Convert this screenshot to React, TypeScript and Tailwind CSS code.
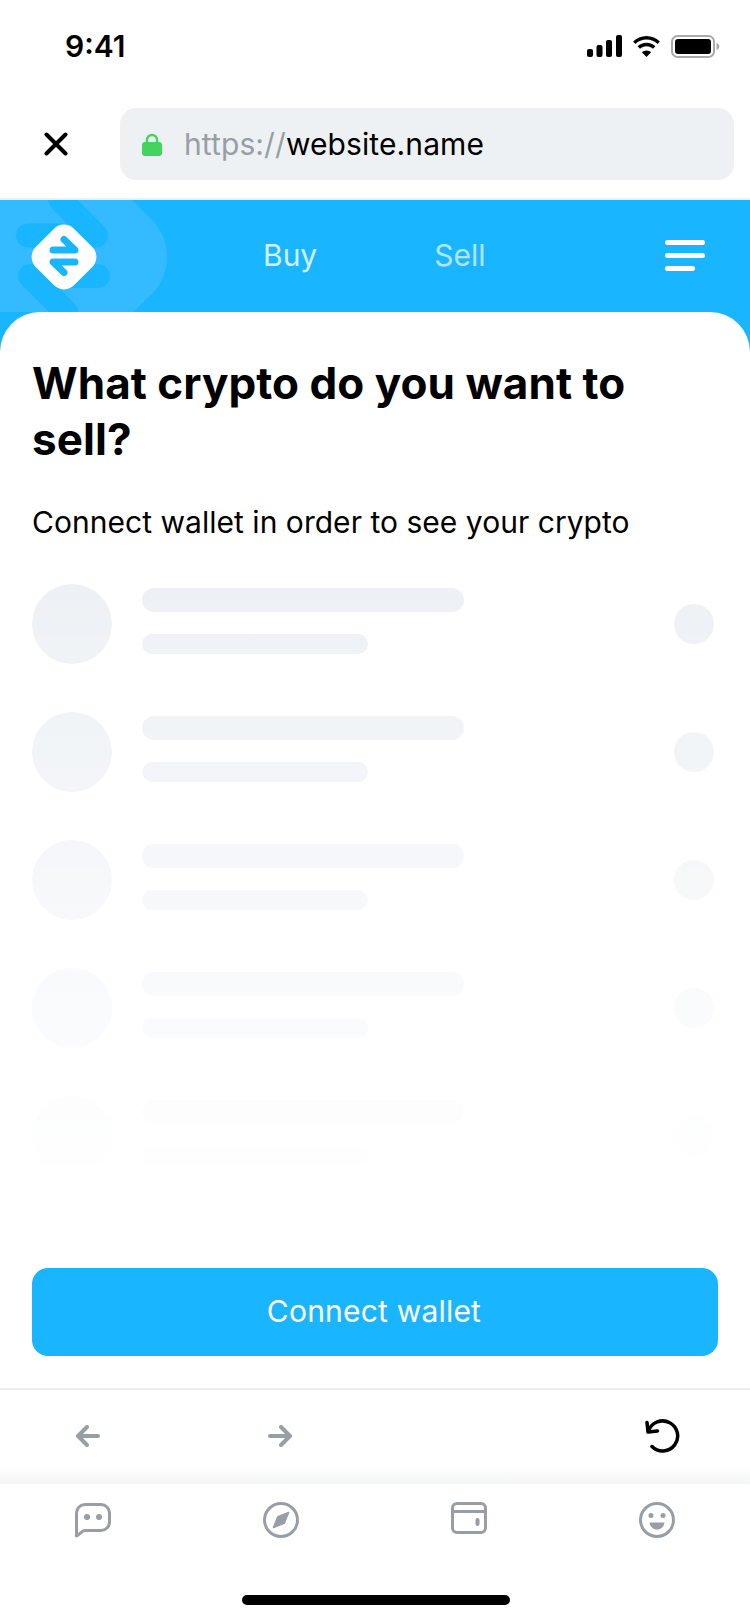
import React from "react";

const ROWS = [0, 1, 2, 3, 4];

function StatusIcons() {
  return (
    <div className="flex items-center gap-[9px]">
      <svg width="35" height="22" viewBox="0 0 35 22" fill="#000">
        <rect x="0" y="14" width="6" height="8" rx="2" />
        <rect x="9.5" y="10" width="6" height="12" rx="2" />
        <rect x="19" y="5" width="6" height="17" rx="2" />
        <rect x="29" y="0" width="6" height="22" rx="2" />
      </svg>
      <svg width="31" height="23" viewBox="0 0 31 23" fill="#000">
        <path d="M15.5 4.6c4.3 0 8.200 1.700 11.100 4.400l2.300-2.400C25.400 3.200 20.700 1 15.500 1S5.600 3.200 2.100 6.600l2.300 2.400c2.900-2.700 6.800-4.400 11.100-4.400z" />
        <path d="M15.500 11.200c2.500 0 4.800 1 6.500 2.500l2.400-2.400c-2.400-2.200-5.500-3.500-8.900-3.500s-6.500 1.300-8.900 3.500l2.400 2.400c1.700-1.500 4-2.500 6.500-2.500z" />
        <path d="M15.500 22l4.600-4.800c-1.200-1.100-2.800-1.800-4.600-1.800s-3.400.7-4.600 1.800z" />
      </svg>
      <svg width="49" height="23" viewBox="0 0 49 23">
        <rect x="1" y="1" width="42" height="21" rx="5.500" fill="none" stroke="#a9a9a9" strokeWidth="2" />
        <rect x="4" y="4" width="36" height="15" rx="3" fill="#000" />
        <path d="M45.500 8v7c1.700-.6 2.800-1.900 2.800-3.500S47.200 8.600 45.500 8z" fill="#a9a9a9" />
      </svg>
    </div>
  );
}

function BrandMark() {
  return (
    <svg className="absolute left-0 top-0" width="170" height="112" viewBox="0 0 170 112" fill="none">
      <path d="M-30 -30H102L152 20C172 40 172 74 152 94L133 112H-30Z" fill="#33baff" />
      <path d="M28 35.500H96L60 -1" stroke="#1ab5ff" strokeWidth="24" strokeLinecap="round" strokeLinejoin="round" />
      <path d="M98 76H30L66 112" stroke="#1ab5ff" strokeWidth="24" strokeLinecap="round" strokeLinejoin="round" />
      <rect x="37" y="30" width="54" height="54" rx="14" transform="rotate(45 64 57)" fill="#fff" />
      <path d="M53 50H75L64 39.500" stroke="#1ab5ff" strokeWidth="7" strokeLinecap="round" strokeLinejoin="round" />
      <path d="M75 62H53L64 72.500" stroke="#1ab5ff" strokeWidth="7" strokeLinecap="round" strokeLinejoin="round" />
    </svg>
  );
}

function SkeletonRow() {
  return (
    <div className="flex items-center">
      <div className="h-20 w-20 rounded-full bg-[#edf1f5]" />
      <div className="mb-[6px] ml-[30px] flex flex-1 flex-col gap-[22px]">
        <div className="h-6 w-[322px] rounded-xl bg-[#edf1f5]" />
        <div className="h-5 w-[226px] rounded-[10px] bg-[#edf1f5]" />
      </div>
      <div className="mr-1 h-10 w-10 rounded-full bg-[#edf1f5]" />
    </div>
  );
}

export default function App() {
  return (
    <div className="flex h-[1624px] w-[750px] flex-col overflow-hidden bg-white font-['Inter',sans-serif] text-black">
      {/* Status bar */}
      <div className="flex h-[90px] shrink-0 items-center justify-between pl-[65px] pr-[30px] pt-[2px]">
        <span className="text-[30px] font-semibold leading-none">9:41</span>
        <StatusIcons />
      </div>

      {/* Address bar */}
      <div className="flex h-[110px] shrink-0 items-start border-b-2 border-[#eef1f4] pl-[44px] pr-4 pt-[18px]">
        <div className="flex h-[72px] items-center">
          <svg width="24" height="24" viewBox="0 0 24 24" fill="none" stroke="#000" strokeWidth="4" strokeLinecap="round">
            <path d="M2.500 2.500L21.500 21.500M21.500 2.500L2.500 21.500" />
          </svg>
        </div>
        <div className="ml-[52px] flex h-[72px] flex-1 items-center rounded-2xl bg-[#eef1f4] pl-[22px]">
          <svg width="20" height="23" viewBox="0 0 20 23" fill="none">
            <path d="M5 11V7a5 5 0 0 1 10 0v4" stroke="#44d35c" strokeWidth="2.500" />
            <rect x="0" y="9" width="20" height="14" rx="3" fill="#44d35c" />
          </svg>
          <span className="ml-[22px] pb-[1px] text-[30px] leading-none tracking-[0.1px]">
            <span className="text-[#979ea5]">https://</span>website.name
          </span>
        </div>
      </div>

      {/* Site */}
      <div className="flex flex-1 flex-col bg-[#1ab5ff]">
        <div className="relative flex h-[112px] shrink-0 items-center overflow-hidden pb-[2px]">
          <BrandMark />
          <span className="relative ml-[263px] text-[30px] leading-none text-white/80">Buy</span>
          <span className="relative ml-[117px] text-[30px] leading-none text-white/65">Sell</span>
          <div className="ml-auto mr-[45px] flex w-10 flex-col gap-[8px]">
            <div className="h-[5px] w-10 rounded-full bg-white" />
            <div className="h-[5px] w-10 rounded-full bg-white" />
            <div className="h-[5px] w-[30px] rounded-full bg-white" />
          </div>
        </div>

        <div className="flex flex-1 flex-col rounded-t-[40px] bg-white px-8 pt-[43px]">
          <h1 className="text-[44px] font-bold leading-[56px] tracking-[0.05px]">What crypto do you want to sell?</h1>
          <p className="mt-[35px] text-[30px] leading-[40px] tracking-[0.03px]">Connect wallet in order to see your crypto</p>

          <div className="relative mt-[42px]">
            <div className="flex flex-col gap-12">
              {ROWS.map((row) => (
                <SkeletonRow key={row} />
              ))}
            </div>
            <div className="absolute -inset-x-2 -bottom-2 top-0 bg-linear-to-b from-white/0 to-white" />
          </div>

          <button className="mt-[92px] h-[88px] w-[686px] rounded-2xl bg-[#1ab5ff] pb-[1px] pr-[2px] text-[30px] tracking-[0.2px] text-white">
            Connect wallet
          </button>
        </div>
      </div>

      {/* Browser controls */}
      <div className="flex h-[96px] shrink-0 items-center border-t-2 border-[#e8ecec] bg-linear-to-b from-white from-80% to-[#f4f5f5] pb-[2px]">
        <svg className="ml-[76px]" width="24" height="22" viewBox="0 0 24 22" fill="none" stroke="#979ea5" strokeWidth="4" strokeLinecap="round" strokeLinejoin="round">
          <path d="M22 11H2M11 2L2 11L11 20" />
        </svg>
        <svg className="ml-[168px]" width="24" height="22" viewBox="0 0 24 22" fill="none" stroke="#979ea5" strokeWidth="4" strokeLinecap="round" strokeLinejoin="round">
          <path d="M2 11H22M13 2L22 11L13 20" />
        </svg>
        <svg className="ml-[352px]" width="36" height="34" viewBox="0 0 36 34" fill="none" stroke="#000" strokeWidth="3.500" strokeLinecap="round" strokeLinejoin="round">
          <path d="M4.500 12A15 15 0 1 1 8 27.500" />
          <path d="M3 3.500L4 13L13.500 12" />
        </svg>
      </div>

      {/* Tabs */}
      <div className="flex h-[140px] shrink-0 flex-col bg-white">
        <div className="ml-[-1px] grid w-[752px] grid-cols-4 justify-items-center pt-[18px]">
          <svg width="36" height="37" viewBox="0 0 36 37" fill="none">
            <path d="M1.500 34V11A8.500 8.500 0 0 1 10 2.500H26A8.500 8.500 0 0 1 34.500 11V20A8.500 8.500 0 0 1 26 28.500H10C7 28.500 5 32 1.500 34Z" stroke="#979ea5" strokeWidth="3" strokeLinejoin="round" />
            <circle cx="12" cy="15" r="3" fill="#979ea5" />
            <circle cx="24" cy="15" r="3" fill="#979ea5" />
          </svg>
          <svg width="36" height="36" viewBox="0 0 36 36" fill="none">
            <circle cx="18" cy="18" r="16.500" stroke="#979ea5" strokeWidth="3" />
            <path d="M26 10L21.500 21.500L10 26L14.500 14.500Z" fill="#979ea5" strokeLinejoin="round" stroke="#979ea5" />
          </svg>
          <svg width="36" height="32" viewBox="0 0 36 32" fill="none">
            <rect x="1.500" y="1.500" width="33" height="29" rx="4.500" stroke="#979ea5" strokeWidth="3" />
            <path d="M2 9.500H34" stroke="#979ea5" strokeWidth="3" />
            <rect x="24.500" y="16" width="4" height="8" rx="2" fill="#979ea5" />
          </svg>
          <svg width="36" height="36" viewBox="0 0 36 36" fill="none">
            <circle cx="18" cy="18" r="16.500" stroke="#979ea5" strokeWidth="3" />
            <circle cx="12" cy="13.500" r="2.500" fill="#979ea5" />
            <circle cx="24" cy="13.500" r="2.500" fill="#979ea5" />
            <path d="M10.500 20.500H25.500C25 25 22 27.500 18 27.500S11 25 10.500 20.500Z" fill="#979ea5" />
          </svg>
        </div>
        <div className="ml-[242px] mt-[56px] h-[10px] w-[268px] rounded-full bg-black" />
      </div>
    </div>
  );
}
